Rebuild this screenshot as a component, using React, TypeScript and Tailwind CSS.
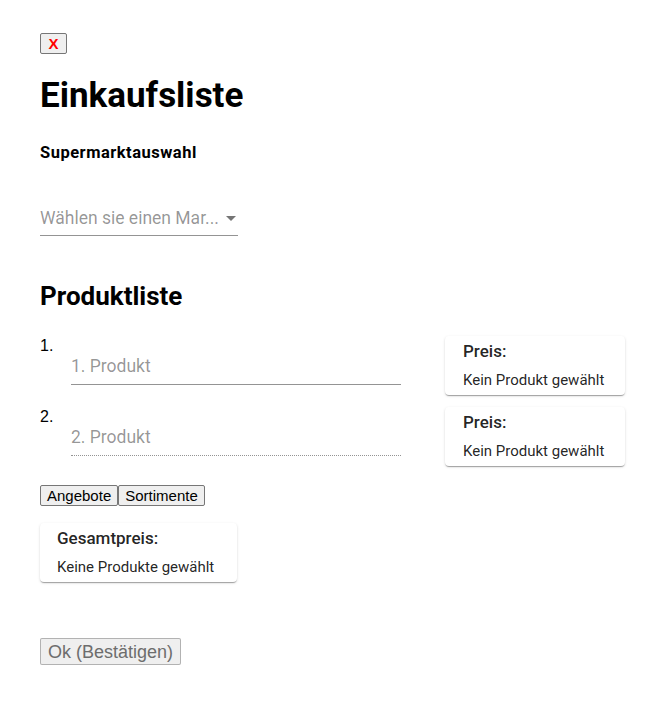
import React from "react";

const btn =
  "h-[21px] bg-[#efefef] border border-[#767676] rounded-[2px] px-[6px] font-['Liberation_Sans',Arial,sans-serif] text-[15px] leading-[17px] text-black";

function PriceCard({ title, text, className = "" }: { title: string; text: string; className?: string }) {
  return (
    <div
      className={
        "bg-white rounded-[4px] shadow-[0_2px_1px_-1px_rgba(0,0,0,0.2),0_1px_1px_0_rgba(0,0,0,0.14),0_1px_3px_0_rgba(0,0,0,0.12)] pt-[3px] " +
        className
      }
    >
      <div className="text-[17px] font-medium text-[rgba(0,0,0,0.87)] leading-[24px]">{title}</div>
      <div className="text-[15px] text-[rgba(0,0,0,0.87)] leading-[20px] mt-[7px]">{text}</div>
    </div>
  );
}

export default function App() {
  return (
    <main className="min-h-screen bg-white px-[40px] pt-[33px] font-['Roboto',sans-serif] text-black">
      {/* close */}
      <button className="block bg-[#efefef] border border-[#767676] rounded-[2px] w-[27px] h-[21px] font-['Liberation_Sans',Arial,sans-serif] text-[15px] font-bold text-[#ff0000] leading-none">
        X
      </button>

      <h1 className="mt-[22px] text-[35px] font-bold leading-[40px]">Einkaufsliste</h1>

      <h4 className="mt-[27px] text-[16.5px] tracking-[0.5px] font-bold leading-[20px]">Supermarktauswahl</h4>

      {/* supermarket select */}
      <div className="mt-[43px] w-[198px] border-b border-[rgba(0,0,0,0.42)] flex items-center pb-[5px]">
        <span className="flex-1 whitespace-nowrap overflow-hidden text-[17.5px] text-[rgba(0,0,0,0.42)] leading-[24px]">
          Wählen sie einen Mar...
        </span>
        <svg width="24" height="24" viewBox="0 0 24 24" className="shrink-0 -mr-[5px] -ml-[8px]">
          <path d="M7 10l5 5 5-5z" fill="rgba(0,0,0,0.54)" />
        </svg>
      </div>

      <h2 className="mt-[44px] text-[26px] font-bold leading-[32px]">Produktliste</h2>

      <ol className="mt-[25px] w-[585px]">
        {[1, 2].map((n) => (
          <li key={n} className={"flex justify-between " + (n === 2 ? "mt-[13px]" : "")}>
            <div className="flex-1">
              <div className="font-['Liberation_Sans',Arial,sans-serif] text-[16px] leading-[18px]">{n}.</div>
              <div
                className={
                  "-mt-[1px] ml-[31px] w-[330px] pb-[5px] " +
                  (n === 1 ? "border-b border-[rgba(0,0,0,0.42)]" : "border-b border-dotted border-[rgba(0,0,0,0.42)]")
                }
              >
                <span className="text-[17.5px] text-[rgba(0,0,0,0.42)] leading-[24px]">{n}. Produkt</span>
              </div>
            </div>
            <PriceCard title="Preis:" text="Kein Produkt gewählt" className="w-[180px] h-[59px] -mt-[1px] pl-[18px]" />
          </li>
        ))}
      </ol>

      <div className="mt-[19px] flex">
        <button className={btn}>Angebote</button>
        <button className={btn}>Sortimente</button>
      </div>

      <PriceCard title="Gesamtpreis:" text="Keine Produkte gewählt" className="mt-[17px] w-[197px] h-[59px] pl-[17px]" />

      <button className="block mt-[56px] bg-[#efefef] border border-[#767676]/50 rounded-[2px] px-[7px] h-[27px] font-['Liberation_Sans',Arial,sans-serif] text-[18px] text-[#6d6d6d] leading-[24px]">
        Ok (Bestätigen)
      </button>
    </main>
  );
}
